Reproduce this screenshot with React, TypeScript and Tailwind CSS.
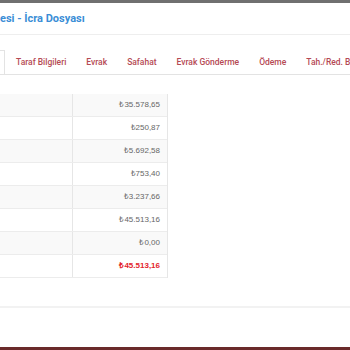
import React from 'react';

const tabs = ['Taraf Bilgileri', 'Evrak', 'Safahat', 'Evrak Gönderme', 'Ödeme', 'Tah./Red. Bilgileri'];

const rows = [
  { value: '₺35.578,65' },
  { value: '₺250,87' },
  { value: '₺5.692,58' },
  { value: '₺753,40' },
  { value: '₺3.237,66' },
  { value: '₺45.513,16' },
  { value: '₺0,00' },
  { value: '₺45.513,16', total: true },
];

export default function App() {
  return (
    <div className="w-[350px] h-[350px] overflow-hidden bg-white flex flex-col">
      <div className="h-[3px] bg-[#707070] shrink-0" />

      {/* başlık */}
      <div className="h-[32px] shrink-0 flex items-center border-b border-[#eeeeee] pt-[2px]">
        <h1 className="text-[11px] font-bold text-[#3b8ed6] whitespace-nowrap font-['Roboto',sans-serif]">
          esi - İcra Dosyası
        </h1>
      </div>

      {/* sekmeler */}
      <div className="mt-[15px] h-[25px] shrink-0 flex border-b border-[#e3e3e3] overflow-hidden">
        <div className="w-[5px] h-[25px] shrink-0 border-t border-r border-[#e3e3e3] bg-white mr-[1px]" />
        {tabs.map(t => (
          <div
            key={t}
            className="px-[10px] shrink-0 flex items-center whitespace-nowrap text-[8.5px] font-medium text-[#b54a54] font-['Roboto',sans-serif]"
          >
            {t}
          </div>
        ))}
      </div>

      {/* tutarlar */}
      <div className="mt-[19px] w-[168px] shrink-0 border-r border-[#e6e6e6] font-['Liberation_Sans',Arial,sans-serif]">
        {rows.map((r, i) => (
          <div
            key={i}
            className={`h-[23px] flex border-b border-[#ececec] ${i % 2 === 0 && !r.total ? 'bg-[#f9f9f9]' : 'bg-white'}`}
          >
            <div className="w-[73px] border-r border-[#e6e6e6]" />
            <div
              className={`flex-1 flex items-center justify-end pr-[7px] text-[8px] ${
                r.total ? 'text-[#e3232c] font-bold' : 'text-[#666666]'
              }`}
            >
              {r.value}
            </div>
          </div>
        ))}
      </div>

      <div className="mt-[28px] h-[2px] shrink-0 bg-[#f2f2f2]" />

      <div className="flex-1" />
      <div className="h-[3px] shrink-0 bg-[#6a2a2a]" />
    </div>
  );
}
